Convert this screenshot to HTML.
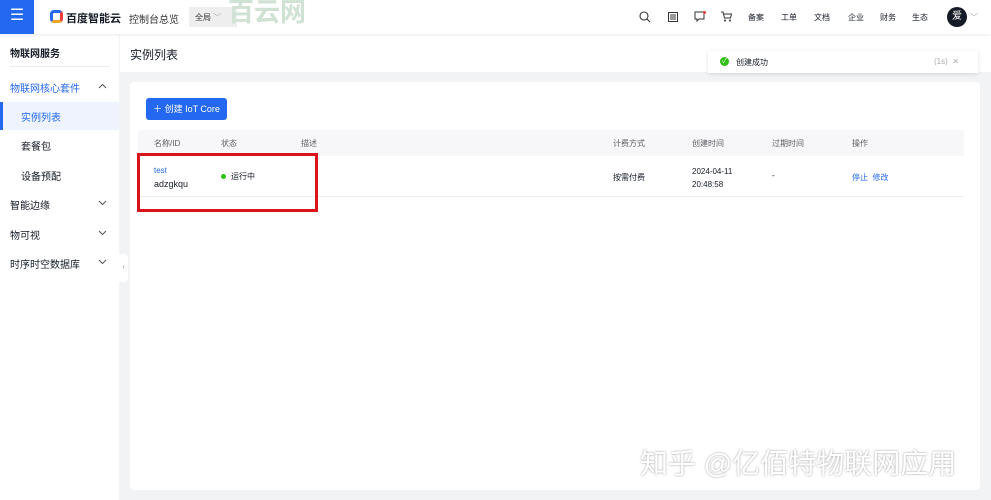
<!DOCTYPE html>
<html><head><meta charset="utf-8"><style>
*{margin:0;padding:0;box-sizing:border-box}
body{width:991px;height:500px;overflow:hidden;background:#f2f3f5;font-family:"Liberation Sans","Noto Sans CJK SC",sans-serif;font-size:10px;color:#151b26;position:relative}
.top{position:absolute;left:0;top:0;width:991px;height:34px;background:#fff;box-shadow:0 1px 3px rgba(0,0,0,.08);z-index:2}
.menu{position:absolute;left:0;top:0;width:34px;height:34px;background:#2468f2;color:#fff;font-size:16px;text-align:center;line-height:32px}
.abs{position:absolute;white-space:nowrap}
.side{position:absolute;left:0;top:34px;width:119px;height:466px;background:#fff}
.si{position:absolute;left:10px;font-size:10px;color:#151b26}
.chev{position:absolute;left:98px}
.card{position:absolute;left:130px;top:82px;width:850px;height:408px;background:#fff;border-radius:4px}
.hdr{position:absolute;left:120px;top:34px;width:871px;height:38px;background:#fff}
</style></head><body>
<div class="top">
<div class="menu">☰</div>
<div class="abs" style="left:50px;top:10px;width:13px;height:13px;border:3px solid #2468f2;border-radius:4px;border-right-color:#e8403a;border-bottom-color:#f5a623"></div>
<div class="abs" style="left:66px;top:10px;font-size:11px;font-weight:bold">百度智能云</div>
<div class="abs" style="left:129px;top:11px;font-size:10px;color:#333">控制台总览</div>
<div class="abs" style="left:189px;top:7px;width:48px;height:20px;background:#eee;font-size:8px;padding:5px 6px;color:#333">全局 <span style="color:#aaa">﹀</span></div>
<div class="abs" style="left:228px;top:-8px;font-size:26px;color:#cfe2d4;font-weight:bold">百云网</div>
<svg class="abs" style="left:639px;top:11px" width="12" height="12"><circle cx="5" cy="5" r="4" fill="none" stroke="#333" stroke-width="1.1"/><line x1="8" y1="8" x2="11" y2="11" stroke="#333" stroke-width="1.1"/></svg>
<svg class="abs" style="left:668px;top:12px" width="10" height="10"><rect x="0.5" y="0.5" width="9" height="9" fill="none" stroke="#333"/><path d="M2 3h6M2 5h6M2 7h6" stroke="#333"/></svg>
<svg class="abs" style="left:694px;top:11px" width="12" height="11"><path d="M1 1h9v7H5l-2 2V8H1z" fill="none" stroke="#333"/><circle cx="10.5" cy="1.5" r="1.5" fill="#e8403a"/></svg>
<svg class="abs" style="left:721px;top:11px" width="11" height="11"><path d="M0 1h2l1.5 6h6l1-4H3" fill="none" stroke="#333"/><circle cx="4" cy="9.5" r="1" fill="#333"/><circle cx="9" cy="9.5" r="1" fill="#333"/></svg>
<div class="abs" style="left:748px;top:12px;font-size:8px">备案</div>
<div class="abs" style="left:781px;top:12px;font-size:8px">工单</div>
<div class="abs" style="left:814px;top:12px;font-size:8px">文档</div>
<div class="abs" style="left:848px;top:12px;font-size:8px">企业</div>
<div class="abs" style="left:880px;top:12px;font-size:8px">财务</div>
<div class="abs" style="left:912px;top:12px;font-size:8px">生态</div>
<div class="abs" style="left:947px;top:7px;width:20px;height:20px;border-radius:50%;background:#151b26;color:#fff;font-size:10px;text-align:center;line-height:20px">爱</div>
<div class="abs" style="left:970px;top:12px;font-size:8px;color:#aaa">﹀</div>
</div>
<div class="side">
<div class="si" style="top:11px;font-weight:bold">物联网服务</div>
<div class="abs" style="left:10px;top:32px;width:100px;height:1px;background:#eee"></div>
<div class="si" style="top:46px;color:#2468f2">物联网核心套件</div>
<svg class="chev" style="top:49px" width="9" height="6"><path d="M1 5l3.5-3.5L8 5" fill="none" stroke="#555"/></svg>
<div class="abs" style="left:0;top:68px;width:119px;height:28px;background:#eef3fe;border-left:3px solid #2468f2"></div>
<div class="si" style="top:75px;left:21px;color:#2468f2">实例列表</div>
<div class="si" style="top:104px;left:21px">套餐包</div>
<div class="si" style="top:134px;left:21px">设备预配</div>
<div class="si" style="top:163px">智能边缘</div>
<svg class="chev" style="top:166px" width="9" height="6"><path d="M1 1l3.5 3.5L8 1" fill="none" stroke="#555"/></svg>
<div class="si" style="top:193px">物可视</div>
<svg class="chev" style="top:196px" width="9" height="6"><path d="M1 1l3.5 3.5L8 1" fill="none" stroke="#555"/></svg>
<div class="si" style="top:222px">时序时空数据库</div>
<svg class="chev" style="top:225px" width="9" height="6"><path d="M1 1l3.5 3.5L8 1" fill="none" stroke="#555"/></svg>
</div>
<div class="abs" style="left:119px;top:254px;width:9px;height:28px;background:#fff;border-radius:0 4px 4px 0;font-size:7px;color:#888;line-height:28px;text-align:center">‹</div>
<div class="hdr"><div class="abs" style="left:10px;top:12px;font-size:12px">实例列表</div></div>
<div class="card">
<div class="abs" style="left:16px;top:16px;width:81px;height:22px;background:#2468f2;border-radius:3px;color:#fff;font-size:9px;line-height:22px;text-align:center">＋ 创建 IoT Core</div>
<div class="abs" style="left:8px;top:48px;width:826px;height:26px;background:#f7f7f9"></div>
<div class="abs" style="left:24px;top:56px;font-size:8px;color:#5c5f66">名称/ID</div>
<div class="abs" style="left:91px;top:56px;font-size:8px;color:#5c5f66">状态</div>
<div class="abs" style="left:171px;top:56px;font-size:8px;color:#5c5f66">描述</div>
<div class="abs" style="left:483px;top:56px;font-size:8px;color:#5c5f66">计费方式</div>
<div class="abs" style="left:562px;top:56px;font-size:8px;color:#5c5f66">创建时间</div>
<div class="abs" style="left:642px;top:56px;font-size:8px;color:#5c5f66">过期时间</div>
<div class="abs" style="left:722px;top:56px;font-size:8px;color:#5c5f66">操作</div>
<div class="abs" style="left:24px;top:84px;font-size:8px;color:#2468f2">test</div>
<div class="abs" style="left:24px;top:97px;font-size:9px">adzgkqu</div>
<div class="abs" style="left:91px;top:92px;width:5px;height:5px;border-radius:50%;background:#30bf13"></div>
<div class="abs" style="left:101px;top:89px;font-size:8px">运行中</div>
<div class="abs" style="left:483px;top:90px;font-size:8px">按需付费</div>
<div class="abs" style="left:562px;top:83px;font-size:8px;line-height:13px">2024-04-11<br>20:48:58</div>
<div class="abs" style="left:642px;top:89px;font-size:8px">-</div>
<div class="abs" style="left:722px;top:90px;font-size:8px;color:#2468f2">停止 &nbsp;修改</div>
<div class="abs" style="left:8px;top:114px;width:826px;height:1px;background:#eee"></div>
<div class="abs" style="left:7px;top:71px;width:181px;height:59px;border:3px solid #d9141b"></div>
</div>
<div class="abs" style="left:708px;top:51px;width:270px;height:22px;background:#fff;box-shadow:0 1px 4px rgba(0,0,0,.12)">
<div class="abs" style="left:12px;top:6px;width:9px;height:9px;border-radius:50%;background:#30bf13;color:#fff;font-size:7px;line-height:9px;text-align:center">✓</div>
<div class="abs" style="left:28px;top:6px;font-size:8px">创建成功</div>
<div class="abs" style="left:226px;top:6px;font-size:8px;color:#aaa">(1s) &nbsp;✕</div>
</div>
<div class="abs" style="left:640px;top:442px;font-size:28px;color:#fff;text-shadow:0 0 2px #999">知乎 @亿佰特物联网应用</div>
</body></html>
